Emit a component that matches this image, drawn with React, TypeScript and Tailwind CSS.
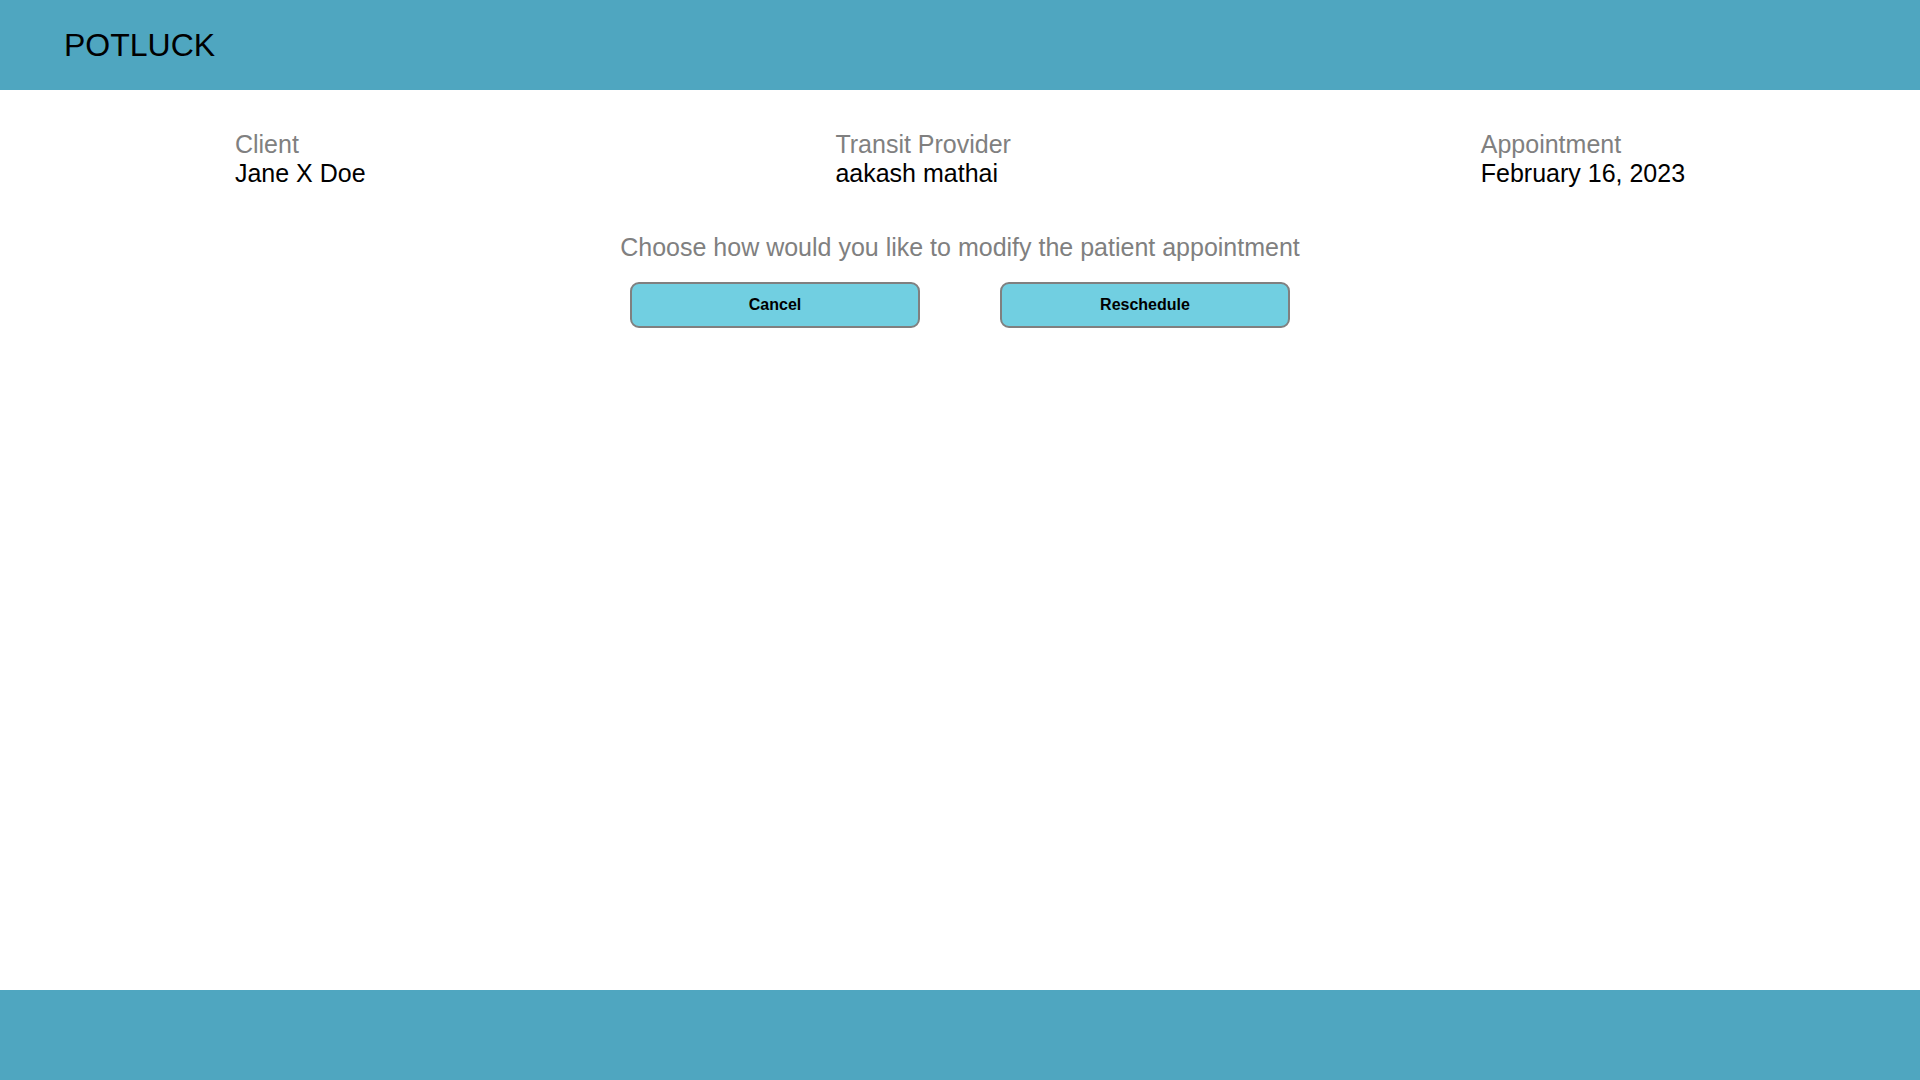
export default function App() {
  const details = [
    { label: 'Client', value: 'Jane X Doe' },
    { label: 'Transit Provider', value: 'aakash mathai' },
    { label: 'Appointment', value: 'February 16, 2023' },
  ]

  return (
    <div className="min-h-screen flex flex-col bg-white font-['Liberation_Sans',Arial,sans-serif]">
      {/* Header */}
      <header className="h-[90px] bg-[#4fa6c0] flex items-center pl-16">
        <h1 className="text-[32px] text-black">POTLUCK</h1>
      </header>

      <main className="flex-1 pt-10">
        <div className="flex justify-around">
          {details.map((d) => (
            <div key={d.label} className="text-[25px] leading-[29px]">
              <div className="text-[#808080]">{d.label}</div>
              <div className="text-black">{d.value}</div>
            </div>
          ))}
        </div>

        <p className="mt-[45px] text-center text-[25px] leading-[29px] text-[#808080]">
          Choose how would you like to modify the patient appointment
        </p>

        <div className="mt-5 flex justify-center gap-20">
          <button className="w-[290px] h-[46px] bg-[#71cfe1] border-2 border-[#808080] rounded-[9px] text-base font-bold text-black">
            Cancel
          </button>
          <button className="w-[290px] h-[46px] bg-[#71cfe1] border-2 border-[#808080] rounded-[9px] text-base font-bold text-black">
            Reschedule
          </button>
        </div>
      </main>

      {/* Footer */}
      <footer className="h-[90px] bg-[#4fa6c0]" />
    </div>
  )
}
